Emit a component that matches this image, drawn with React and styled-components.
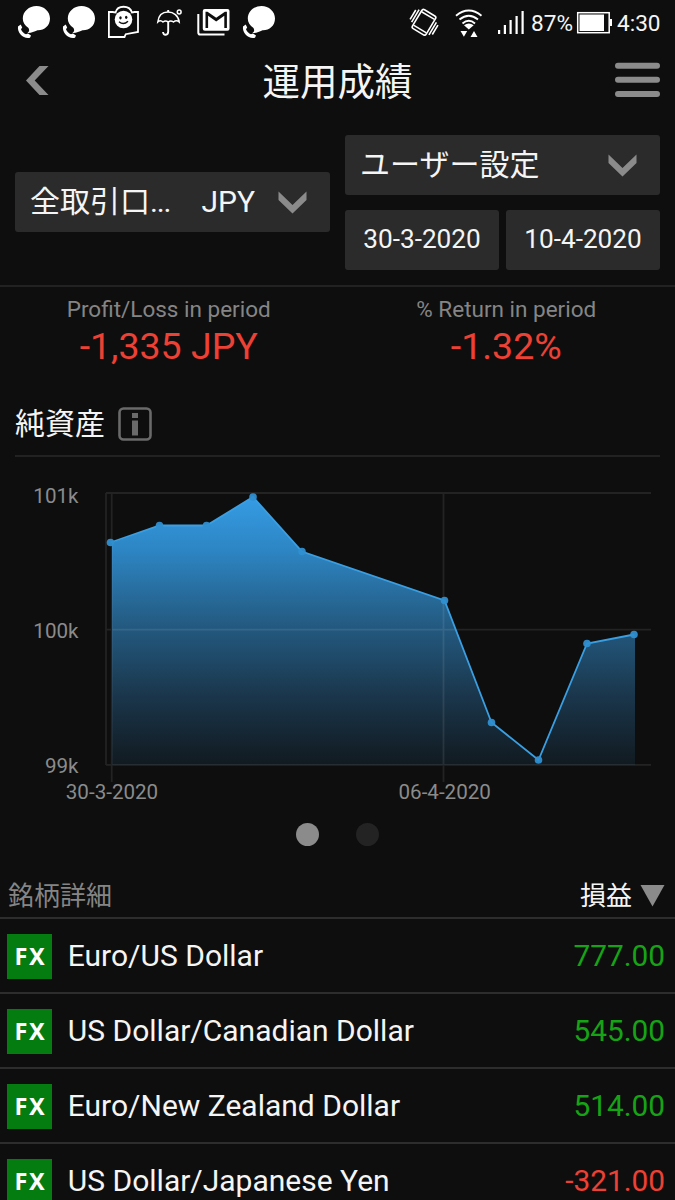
import React from "react";
import styled, { createGlobalStyle } from "styled-components";

const GlobalStyle = createGlobalStyle`
  * { box-sizing: border-box; }
  html, body { margin: 0; padding: 0; background: #0e0e0e; overflow: hidden; }
`;

const Screen = styled.div`
  width: 675px;
  height: 1200px;
  overflow: hidden;
  display: flex;
  flex-direction: column;
  background: #0e0e0e;
  color: #f5f5f5;
  font-family: Roboto, "Noto Sans CJK JP", sans-serif;
`;

const StatusBar = styled.div`
  flex: none;
  height: 45px;
  display: flex;
  justify-content: space-between;
  padding: 0 15px 0 12px;
`;

const StatusGroup = styled.div`
  display: flex;
  height: 45px;
`;

const StatusIcon = styled.svg`
  display: block;
  flex: none;
  width: ${(p) => p.$w}px;
  height: 45px;
`;

const StatusText = styled.div`
  width: ${(p) => p.$w}px;
  font-size: 22.6px;
  line-height: 47px;
  white-space: nowrap;
`;

const Header = styled.header`
  flex: none;
  height: 75px;
  display: grid;
  grid-template-columns: 60px 1fr 60px;
  align-items: center;
`;

const Title = styled.h1`
  margin: 0;
  text-align: center;
  font-size: 37.5px;
  font-weight: 400;
  line-height: 75px;
  height: 75px;
`;

const Glyph = styled.svg`
  display: block;
  flex: none;
`;

const Filters = styled.section`
  flex: none;
  height: 167px;
  padding: 15px 15px 0;
  display: grid;
  grid-template-columns: 315px 315px;
  column-gap: 15px;
  align-items: start;
  border-bottom: 2px solid #222;
`;

const Column = styled.div`
  display: flex;
  flex-direction: column;
  gap: 15px;
  padding-top: ${(p) => p.$offset || 0}px;
`;

const Pair = styled.div`
  display: grid;
  grid-template-columns: 154px 154px;
  gap: 7px;
`;

const Field = styled.div`
  height: 60px;
  border-radius: 3px;
  background: #2b2b2b;
  display: flex;
  align-items: center;
  padding: 0 23px 0 15px;
  font-size: 30px;
  line-height: 60px;
  white-space: nowrap;
`;

const FieldLabel = styled.span`
  flex: 1;
  height: 60px;
`;

const Ellipsis = styled.span`
  letter-spacing: -1.2px;
`;

const Currency = styled.span`
  margin-right: 23px;
  height: 60px;
`;

const DateField = styled(Field)`
  justify-content: center;
  padding: 0;
  font-size: 26.2px;
  line-height: 58px;
  align-items: flex-start;
`;

const Stats = styled.section`
  flex: none;
  height: 103px;
  display: grid;
  grid-template-columns: 1fr 1fr;
  padding-top: 8px;
  text-align: center;
`;

const StatLabel = styled.div`
  font-size: 22.5px;
  line-height: 28px;
  color: #858585;
`;

const StatValue = styled.div`
  font-size: 37.5px;
  line-height: 46px;
  color: #ec4134;
`;

const SectionTitle = styled.h2`
  flex: none;
  margin: 0 15px;
  height: 67px;
  display: flex;
  align-items: center;
  gap: 13px;
  padding-top: 2px;
  border-bottom: 2px solid #222;
  font-size: 30px;
  font-weight: 400;
  line-height: 63px;
`;

const Chart = styled.svg`
  display: block;
  flex: none;
  width: 675px;
  height: 354px;
  font-size: 20.6px;
  fill: #8b8b8b;
`;

const Pager = styled.div`
  flex: none;
  height: 48px;
  display: flex;
  justify-content: center;
  gap: 37px;
  padding-top: 12px;
`;

const PageDot = styled.span`
  width: 23px;
  height: 23px;
  border-radius: 50%;
  background: ${(p) => (p.$active ? "#8b8b8b" : "#232323")};
`;

const ListHeader = styled.div`
  flex: none;
  height: 60px;
  padding: 16px 10px 0 8px;
  display: flex;
  align-items: center;
  justify-content: space-between;
  border-bottom: 2px solid #2d2d2d;
  font-size: 26px;
  line-height: 42px;
  color: #858585;
`;

const SortLabel = styled.div`
  display: flex;
  align-items: center;
  gap: 8px;
  color: #f5f5f5;
`;

const Row = styled.div`
  flex: none;
  height: 75px;
  display: flex;
  align-items: center;
  padding: 0 10px 0 7.4px;
  border-bottom: 2px solid #2d2d2d;
  font-size: 30px;
  line-height: 72px;
`;

const Badge = styled.span`
  width: 45px;
  height: 45px;
  margin: 2px 15.4px 0 0;
  background: #047c10;
  font: 700 23.5px/44px "Noto Sans", sans-serif;
  letter-spacing: 1.5px;
  text-align: center;
  text-indent: 1px;
  color: #fff;
`;

const Name = styled.span`
  flex: 1;
  white-space: nowrap;
`;

const Amount = styled.span`
  font-size: 29.8px;
  color: ${(p) => (p.$negative ? "#ec4134" : "#16a416")};
`;

const Balloon = () => (
  <StatusIcon $w={45} viewBox="0 0 45 45">
    <path d="M24.5 6C32 6 38 11.500 38 18.500C38 26 32 30.500 25.500 30.200C22 31.500 19.500 33.200 15.500 33C17.500 31.500 17.500 30 16.500 28C12.800 25.500 10.800 22.500 10.800 18.500C10.800 11.500 17 6 24.500 6Z" fill="#fff" />
    <path d="M6 26.500L8.700 24.500L10.200 27.500L9 29.300C10 31.800 11.700 33.400 14 34.300L16 33.500L19 35.500L18 37.700C12 39.500 5 33 6 26.500Z" fill="#fff" />
  </StatusIcon>
);

const Smile = () => (
  <StatusIcon $w={45} viewBox="0 0 45 45" fill="none" stroke="#fff">
    <path d="M6.900 12H10.500L13.500 12.500C15.500 4.800 27.500 4.800 30 12.500L32.500 12H36V32L23.700 34.200L22.500 37H6.900Z" strokeWidth="1.800" />
    <circle cx="21.500" cy="19.500" r="8.800" fill="#fff" stroke="none" />
    <ellipse cx="18.500" cy="17.800" rx="1.200" ry="1.600" fill="#111" stroke="none" />
    <ellipse cx="24.200" cy="17.300" rx="1.200" ry="1.600" fill="#111" stroke="none" />
    <path d="M17 21.700Q21.500 25.500 26 21.200" stroke="#111" strokeWidth="1.400" />
  </StatusIcon>
);

const Umbrella = () => (
  <StatusIcon $w={45} viewBox="0 0 45 45" fill="none" stroke="#fff" strokeWidth="1.500">
    <path d="M10.800 22C11.500 15.500 15.500 12 21 12S31.500 15.500 32.200 22Q29.500 19.500 26.500 22Q23.500 20 21.300 22Q18.500 20 16 22Q13.500 19.500 10.800 22Z" />
    <path d="M21.200 10V12M21.200 22V31.500C21.200 35.500 16.500 36 16 32" strokeWidth="1.900" />
    <circle cx="32.200" cy="12" r="1.900" />
  </StatusIcon>
);

const Mail = () => (
  <StatusIcon $w={45} viewBox="0 0 45 45">
    <path d="M6.300 14V32.500Q6.300 34.600 8.200 34.600H32.500" fill="none" stroke="#fff" strokeWidth="2" />
    <rect x="10.800" y="9" width="26.700" height="21.800" rx="2" fill="#fff" />
    <path d="M13.500 11.800H15.500L24.200 17.800L32.900 11.800H34.900V28H32.300V15.800L24.200 21.500L16.100 15.800V28H13.500Z" fill="#0e0e0e" />
  </StatusIcon>
);

const Vibrate = () => (
  <StatusIcon $w={47} viewBox="402 0 47 45" fill="none" stroke="#fff">
    <g transform="rotate(31 424 22.300)" strokeWidth="1.600">
      <rect x="416" y="11.300" width="16" height="22" rx="2" />
      <path d="M416.500 14.500H431.500M416.500 30.200H431.500" strokeWidth="1.500" />
      <path d="M413.300 14V28.500M410.600 16V27M434.700 16V30.500M437.400 17.500V28.500" />
    </g>
  </StatusIcon>
);

const Wifi = () => (
  <StatusIcon $w={44} viewBox="449 0 44 45" fill="none" stroke="#fff" strokeWidth="1.900">
    <path d="M456 15.700Q468.800 5.500 481.500 15.700M459.500 19.500Q468.800 12 478 19.500M462.500 23.500Q468.800 18 475 23.500" />
    <path d="M464 25.300Q468.800 21.800 473.700 25.300L468.800 29.500ZM460.500 31H467.200L463.900 36.800ZM470.500 37L474 31L477.500 37Z" fill="#fff" stroke="none" />
  </StatusIcon>
);

const Signal = () => (
  <StatusIcon $w={38} viewBox="493 0 38 45" fill="#fff">
    <path d="M498 30h2.200v4H498zM503.800 25h2.200v9h-2.200zM509.500 20h2.200v14h-2.200zM515.500 16h2.200v18H515.500zM521.500 11h2.200v23h-2.200z" />
  </StatusIcon>
);

const Battery = () => (
  <StatusIcon $w={44} viewBox="573 0 44 45" fill="none" stroke="#fff">
    <rect x="577.700" y="12.700" width="31.500" height="20" strokeWidth="1.500" />
    <path d="M579.500 14.500h24.500v16.500h-24.500zM610 19h2v7h-2z" fill="#fff" stroke="none" />
  </StatusIcon>
);

const Chevron = () => (
  <Glyph width="29" height="23" viewBox="0 0 29 23">
    <path d="M.5.500L14.500 14L28.500.500V9L14.500 22.500L.5 9Z" fill="#8b8b8b" />
  </Glyph>
);

const points = [
  [110.5, 542.5], [159.5, 525.5], [206.5, 525.5], [253, 497], [302, 551.5],
  [444.5, 600.5], [491.5, 722.5], [538.5, 760], [587, 643.5], [634, 634.5],
];
const line = points.map((p) => p.join(",")).join(" ");

const EquityChart = () => (
  <Chart viewBox="0 457 675 354">
    <defs>
      <linearGradient id="equity" x1="0" y1="497" x2="0" y2="765" gradientUnits="userSpaceOnUse">
        <stop offset="0" stopColor="#359ce4" />
        <stop offset=".2" stopColor="#2d85c3" />
        <stop offset=".46" stopColor="#245d85" />
        <stop offset=".75" stopColor="#1a354a" />
        <stop offset="1" stopColor="#111a20" />
      </linearGradient>
    </defs>
    <polygon points={`112,765 112,542.5 ${line.slice(line.indexOf(" ") + 1)} 635,634.5 635,765`} fill="url(#equity)" />
    <path d="M106 493H651M106 629.700H651M106 764.800H651M106 493V765M111.700 493V782M443.500 493V782" stroke="#fff" strokeOpacity=".09" strokeWidth="1.800" fill="none" />
    <polyline points={line} fill="none" stroke="#3a9fe2" strokeWidth="1.800" />
    {points.map(([x, y]) => (
      <circle key={x} cx={x} cy={y} r="3.800" fill="#2f8fd0" fillOpacity=".95" />
    ))}
    <text x="78.500" y="503" textAnchor="end">101k</text>
    <text x="78.500" y="638" textAnchor="end">100k</text>
    <text x="78.500" y="773" textAnchor="end">99k</text>
    <text x="112" y="799" textAnchor="middle">30-3-2020</text>
    <text x="444.700" y="799" textAnchor="middle">06-4-2020</text>
  </Chart>
);

const positions = [
  ["Euro/US Dollar", "777.00"],
  ["US Dollar/Canadian Dollar", "545.00"],
  ["Euro/New Zealand Dollar", "514.00"],
  ["US Dollar/Japanese Yen", "-321.00"],
];

export default function App() {
  return (
    <Screen lang="ja">
      <GlobalStyle />
      <StatusBar>
        <StatusGroup>
          <Balloon />
          <Balloon />
          <Smile />
          <Umbrella />
          <Mail />
          <Balloon />
        </StatusGroup>
        <StatusGroup>
          <Vibrate />
          <Wifi />
          <Signal />
          <StatusText $w={42}>87%</StatusText>
          <Battery />
          <StatusText $w={43}>4:30</StatusText>
        </StatusGroup>
      </StatusBar>
      <Header>
        <Glyph width="60" height="75" viewBox="0 45 60 75">
          <path d="M26 80.500L39.500 66H48.500L34.700 80.500L48.500 95H39.500Z" fill="#8b8b8b" />
        </Glyph>
        <Title>運用成績</Title>
        <Glyph width="60" height="75" viewBox="615 45 60 75">
          <path d="M618 65.800H657M618 79.800H657M618 93.900H657" stroke="#8b8b8b" strokeWidth="6" strokeLinecap="round" />
        </Glyph>
      </Header>
      <Filters>
        <Column $offset={37}>
          <Field>
            <FieldLabel>全取引口<Ellipsis>...</Ellipsis></FieldLabel>
            <Currency>JPY</Currency>
            <Chevron />
          </Field>
        </Column>
        <Column>
          <Field>
            <FieldLabel>ユーザー設定</FieldLabel>
            <Chevron />
          </Field>
          <Pair>
            <DateField>30-3-2020</DateField>
            <DateField>10-4-2020</DateField>
          </Pair>
        </Column>
      </Filters>
      <Stats>
        <div>
          <StatLabel>Profit/Loss in period</StatLabel>
          <StatValue>-1,335 JPY</StatValue>
        </div>
        <div>
          <StatLabel>% Return in period</StatLabel>
          <StatValue>-1.32%</StatValue>
        </div>
      </Stats>
      <SectionTitle>
        純資産
        <Glyph width="34" height="34" viewBox="0 0 34 34">
          <rect x="1.500" y="1.500" width="31" height="31" rx="4" fill="none" stroke="#6a6a6a" strokeWidth="2.600" />
          <path d="M14 6h6v5h-6zM14 13.500h6v15h-6z" fill="#6a6a6a" />
        </Glyph>
      </SectionTitle>
      <EquityChart />
      <Pager>
        <PageDot $active />
        <PageDot />
      </Pager>
      <ListHeader>
        <span>銘柄詳細</span>
        <SortLabel>
          損益
          <Glyph width="25" height="22" viewBox="0 0 25 22">
            <path d="M.5 0H24.500L12.500 21.500Z" fill="#8b8b8b" />
          </Glyph>
        </SortLabel>
      </ListHeader>
      {positions.map(([name, amount]) => (
        <Row key={name}>
          <Badge>FX</Badge>
          <Name>{name}</Name>
          <Amount $negative={amount.startsWith("-")}>{amount}</Amount>
        </Row>
      ))}
    </Screen>
  );
}
